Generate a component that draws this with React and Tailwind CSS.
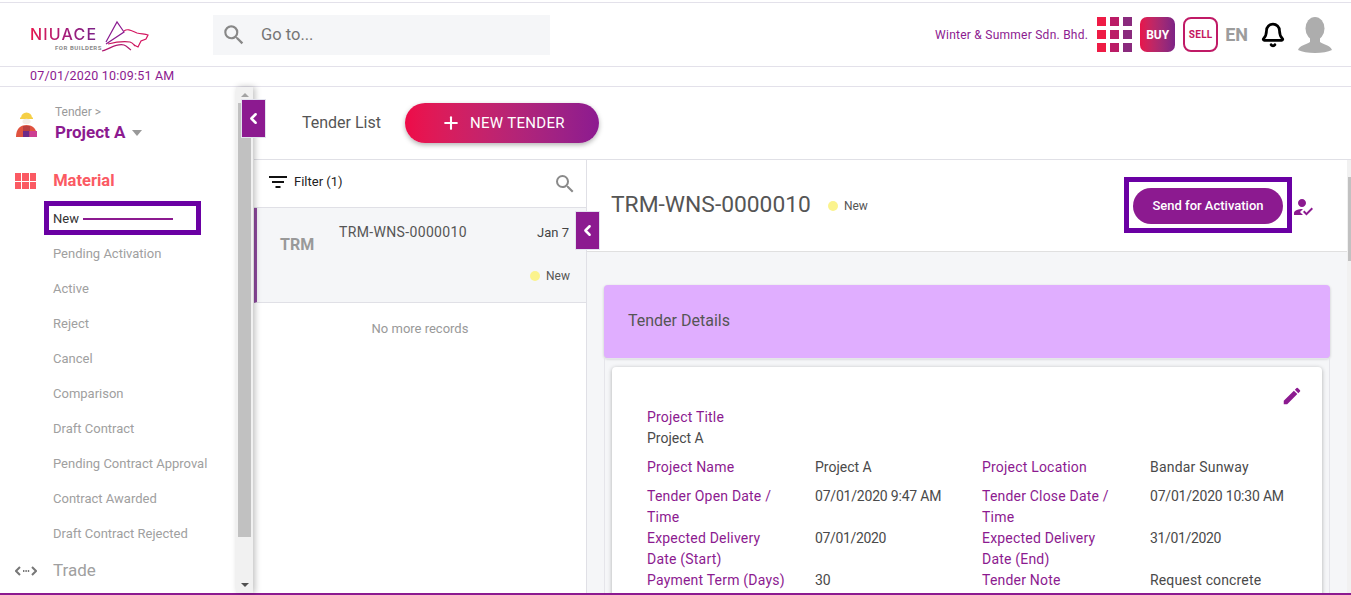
import React from "react";
import { ChevronLeft, Plus, Bell } from "lucide-react";
import { MdSearch, MdEdit, MdHowToReg } from "react-icons/md";

const menuItems = [
  "Pending Activation",
  "Active",
  "Reject",
  "Cancel",
  "Comparison",
  "Draft Contract",
  "Pending Contract Approval",
  "Contract Awarded",
  "Draft Contract Rejected",
];

const Logo = () => (
  <div className="relative w-[125px] h-[40px]">
    <span className="absolute left-0 top-[10px] text-[16px] leading-[18px] tracking-[1.2px] font-medium font-['Inter'] bg-gradient-to-r from-[#e8134a] via-[#a81a78] to-[#7a2088] bg-clip-text text-transparent">
      NIUACE
    </span>
    <span className="absolute left-[25px] top-[29px] text-[6px] leading-[7px] font-bold tracking-[0.55px] text-[#8a8a8a]">
      FOR BUILDERS
    </span>
    <svg className="absolute left-[70px] top-0 overflow-visible" width="50" height="38" viewBox="0 0 50 38" fill="none" strokeWidth="1.2">
      <path d="M6 27 L17 7 L24 17 L6 29" stroke="#8a1a90" />
      <path d="M24 16 C28 13 32 16 37 18 C41 19 45 19 48 20 L46 24 L41 26 L38 32 L34 30" stroke="#d41560" />
      <path d="M2 36 C10 34 16 28 24 30 C27 31 29 34 31 35" stroke="#b0186f" />
      <path d="M8 29 C16 27 22 26 30 27 C33 28 34 30 35 31" stroke="#c8175f" />
    </svg>
  </div>
);

const CollapseButton = ({ className }) => (
  <button className={`absolute z-20 w-[25px] h-[39px] bg-[#8c1a90] border border-[#e3e3ee] flex items-center justify-center ${className}`}>
    <ChevronLeft size={17} strokeWidth={3.5} color="#fff" />
  </button>
);

const Field = ({ label, value, valueClass = "" }) => (
  <>
    <div className="text-[#8c1a90] tracking-[0.2px]">{label}</div>
    <div className={`text-[#4a4a4a] ${valueClass}`}>{value}</div>
  </>
);

export default function App() {
  return (
    <div className="relative h-[595px] overflow-hidden bg-white font-['Roboto',sans-serif] text-[14px] flex flex-col">
      <div className="h-[3px] shrink-0 border-b border-[#e3e1ea]" />
      {/* Top bar */}
      <header className="h-[64px] shrink-0 border-b border-[#e3e1ea] flex items-center pl-[30px] pr-[19px]">
        <Logo />
        <div className="ml-[58px] w-[337px] h-[40px] bg-[#f5f6f8] flex items-center pl-[8px]">
          <MdSearch size={26} color="#888" />
          <span className="ml-[14px] mt-[1px] text-[16.5px] text-[#757575]">Go to...</span>
        </div>
        <div className="ml-auto flex items-center h-full">
          <span className="text-[12px] tracking-[0.25px] text-[#8c1a90]">Winter &amp; Summer Sdn. Bhd.</span>
          <div className="ml-[9px] grid grid-cols-3 gap-[4px]">
            {["#ee1b45", "#bb1c66", "#8a2a7d", "#ee1b45", "#bb1c66", "#8a2a7d", "#ee1b45", "#bb1c66", "#8a2a7d"].map((color, i) => (
              <div key={i} className="w-[9px] h-[9px]" style={{ backgroundColor: color }} />
            ))}
          </div>
          <div className="ml-[8px] w-[35px] h-[35px] rounded-[7px] bg-gradient-to-r from-[#e8134a] to-[#7d2285] flex items-center justify-center text-white text-[12px] font-bold">
            BUY
          </div>
          <div className="ml-[8px] w-[35px] h-[35px] rounded-[8px] border-[2.5px] border-[#c01a66] flex items-center justify-center text-[#c4165c] text-[10px] font-bold tracking-[0.3px]">
            SELL
          </div>
          <span className="ml-[7px] text-[18px] font-bold text-[#9c9c9c]">EN</span>
          <Bell className="ml-[12px]" size={26} color="#000" strokeWidth={2.5} />
          <div className="ml-[12px] w-[34px] h-[36px] overflow-hidden">
            <svg width="34" height="36" viewBox="0 0 34 36" fill="#adadad">
              <ellipse cx="17" cy="11.5" rx="9.5" ry="11.5" />
              <path d="M12 19 L22 19 L22 25 C26 28 32 28 34 33 C30 35 24 36 17 36 C10 36 4 35 0 33 C2 28 8 28 12 25 Z" />
            </svg>
          </div>
        </div>
      </header>

      {/* Clock */}
      <div className="h-[20px] shrink-0 border-b border-[#e3e1ea] pl-[30px] text-[12.5px] leading-[18px] tracking-[0.2px] text-[#8c1a90]">
        07/01/2020 10:09:51 AM
      </div>

      <div className="flex-1 flex min-h-0 border-b-2 border-[#8c1a90] relative">
        {/* Sidebar */}
        <aside className="w-[236px] shrink-0 bg-white overflow-hidden">
          <div className="flex pl-[15px] pt-[18px] h-[77px]">
            <svg className="mt-[6px]" width="22" height="27" viewBox="0 0 22 27">
              <path d="M6 7 a5.5 5.5 0 0 1 11 0 Z" fill="#f5cf45" />
              <rect x="5" y="6.5" width="13" height="1.5" fill="#f5cf45" />
              <ellipse cx="11.5" cy="10.5" rx="4" ry="2.8" fill="#f3ece6" />
              <path d="M1 26 C1 18 5 14 11.5 14 C18 14 22 18 22 26 Z" fill="#e0533f" />
              <rect x="8" y="15" width="7" height="5" fill="#b9403f" />
              <rect x="8" y="20" width="6.5" height="6" fill="#6d2a88" />
              <rect x="14.5" y="20" width="7.5" height="6" fill="#cc3f92" />
            </svg>
            <div className="ml-[18px]">
              <div className="text-[12px] leading-[14px] text-[#9a9a9a]">Tender &gt;</div>
              <div className="flex items-center text-[17px] leading-[22px] mt-[2px] font-bold text-[#8c1a90]">
                Project A
                <span className="ml-[7px] mt-[2px] w-0 h-0 border-x-[5px] border-x-transparent border-t-[6px] border-t-[#999]" />
              </div>
            </div>
          </div>

          <div className="flex items-center pl-[15px] h-[34px]">
            <div className="grid grid-cols-3 gap-[1px]">
              {[0, 1, 2, 3, 4, 5].map((i) => (
                <div key={i} className="w-[6.4px] h-[7.5px] bg-[#fb5a63]" />
              ))}
            </div>
            <span className="ml-[17px] text-[16.5px] font-bold text-[#fb5a63]">Material</span>
          </div>

          <ul className="mt-[3px] pl-[53px] text-[13px]">
            <li className="h-[35px] flex items-center text-[#333]">
              New
              <span className="ml-[4px] w-[90px] h-[2px] bg-[#8c1a90]" />
            </li>
            {menuItems.map((item) => (
              <li key={item} className="h-[35px] flex items-center text-[#a0a0a0]">
                {item}
              </li>
            ))}
          </ul>

          <div className="flex items-center pl-[15px] h-[39px]">
            <svg width="22" height="12" viewBox="0 0 22 12" fill="none" stroke="#777" strokeWidth="2">
              <path d="M5 2 L1 6 L5 10" />
              <path d="M17 2 L21 6 L17 10" />
              <path d="M8 6 h1.4 M10.4 6 h1.4 M12.8 6 h1.4" />
            </svg>
            <span className="ml-[16px] text-[17px] text-[#a0a0a0]">Trade</span>
          </div>
        </aside>

        {/* Sidebar scrollbar */}
        <div className="w-[17px] shrink-0 bg-[#f1f1f1] pl-[2px] pr-[2px] flex flex-col shadow-[2px_0_6px_rgba(0,0,0,0.25)] z-10">
          <div className="h-[16px] flex items-center justify-center">
            <span className="w-0 h-0 border-x-[4px] border-x-transparent border-b-[4px] border-b-[#a3a3a3]" />
          </div>
          <div className="h-[434px] bg-[#c1c1c1]" />
          <div className="mt-auto h-[16px] flex items-center justify-center">
            <span className="w-0 h-0 border-x-[4px] border-x-transparent border-t-[4px] border-t-[#505050]" />
          </div>
        </div>

        {/* Main */}
        <main className="flex-1 min-w-0 ml-[1px] flex flex-col">
          <div className="h-[73px] shrink-0 flex items-center pl-[48px] border-b border-[#e0e0e6]">
            <span className="text-[16px] text-[#555]">Tender List</span>
            <button className="ml-[24px] w-[194px] h-[40px] rounded-[20px] bg-gradient-to-r from-[#ee0a48] to-[#8c1a90] shadow-[0_2px_5px_rgba(0,0,0,0.3)] flex items-center pl-[36px] text-white text-[15px] tracking-[0.3px]">
              <Plus size={20} strokeWidth={2.5} className="mr-[9px]" />
              NEW TENDER
            </button>
          </div>

          <div className="flex-1 min-h-0 flex">
            {/* Tender list */}
            <section className="w-[333px] shrink-0 border-r border-[#e0e0e6] bg-white">
              <div className="h-[48px] pb-[4px] border-b border-[#e0e0e6] flex items-center pl-[15px] pr-[9px] text-[13px] text-[#222]">
                <svg width="18" height="12" viewBox="0 0 18 12" fill="#111">
                  <rect x="0" y="0" width="18" height="2" />
                  <rect x="3" y="5" width="12" height="2" />
                  <rect x="6.5" y="10" width="5" height="2" />
                </svg>
                <span className="ml-[7px]">Filter (1)</span>
                <MdSearch className="ml-auto mt-[4px]" size={24} color="#8a8a8a" />
              </div>
              <div className="h-[95px] bg-[#f5f6f8] border-l-[3px] border-[#8e4a9e] border-b border-b-[#e0e0e6] flex relative">
                <span className="ml-[23px] mt-[27px] text-[16px] leading-[20px] font-bold text-[#999]">TRM</span>
                <span className="absolute left-[82px] top-[15px] text-[14px] leading-[18px] tracking-[0.35px] text-[#555]">TRM-WNS-0000010</span>
                <span className="absolute right-[17px] top-[16px] text-[13px] leading-[18px] text-[#444]">Jan 7</span>
                <span className="absolute right-[16px] top-[59px] flex items-center text-[12px] leading-[18px] text-[#555]">
                  <span className="w-[10px] h-[10px] rounded-full bg-[#fbf38d] mr-[6px]" />
                  New
                </span>
              </div>
              <div className="pt-[18px] text-center text-[13px] leading-[16px] text-[#999]">No more records</div>
            </section>

            {/* Detail */}
            <section className="flex-1 min-w-0 flex">
              <div className="flex-1 min-w-0 flex flex-col bg-[#f5f6f8] overflow-hidden">
                <div className="h-[92px] shrink-0 bg-white border-b border-[#e0e0e0] flex items-center pl-[24px]">
                  <span className="text-[22.8px] text-[#555]">TRM-WNS-0000010</span>
                  <span className="ml-[17px] w-[10px] h-[10px] rounded-full bg-[#fbf38d]" />
                  <span className="ml-[6px] text-[12px] text-[#555]">New</span>
                  <button className="ml-auto mr-[8px] w-[150px] h-[36px] rounded-[18px] bg-[#8c1a90] text-white text-[13px] font-medium">
                    Send for Activation
                  </button>
                  <MdHowToReg className="mr-[32px] mt-[2px]" size={24} color="#8c1a90" />
                </div>
                <div className="pl-[17px] pr-[17px] pt-[33px]">
                  <div className="h-[73px] pb-[2px] bg-[#e0aeff] rounded-[4px] shadow-[0_1px_3px_rgba(0,0,0,0.2)] flex items-center pl-[24px] text-[16px] text-[#555]">
                    Tender Details
                  </div>
                  <div className="border border-[#e5e5ea] px-[7px] pt-[8px]">
                    <div className="relative bg-white rounded-[4px] shadow-[0_1px_4px_rgba(0,0,0,0.3)] pl-[35px] pr-[20px] pt-[40px] pb-[20px] leading-[21px]">
                      <MdEdit className="absolute right-[19px] top-[18px]" size={22} color="#8c1a90" />
                      <div className="text-[#8c1a90] tracking-[0.2px]">Project Title</div>
                      <div className="text-[#4a4a4a]">Project A</div>
                      <div className="mt-[8px] grid grid-cols-[168px_167px_168px_1fr] gap-y-[8px]">
                        <Field label="Project Name" value="Project A" />
                        <Field label="Project Location" value="Bandar Sunway" valueClass="tracking-[0.2px]" />
                        <Field label={<>Tender Open Date /<br />Time</>} value="07/01/2020 9:47 AM" valueClass="tracking-[-0.2px]" />
                        <Field label={<>Tender Close Date /<br />Time</>} value="07/01/2020 10:30 AM" valueClass="tracking-[-0.2px]" />
                      </div>
                      <div className="grid grid-cols-[168px_167px_168px_1fr]">
                        <Field label={<>Expected Delivery<br />Date (Start)</>} value="07/01/2020" valueClass="tracking-[-0.35px]" />
                        <Field label={<>Expected Delivery<br />Date (End)</>} value="31/01/2020" valueClass="tracking-[-0.35px]" />
                        <Field label="Payment Term (Days)" value="30" />
                        <Field label="Tender Note" value="Request concrete" valueClass="tracking-[0.15px]" />
                      </div>
                    </div>
                  </div>
                </div>
              </div>
              {/* Page scrollbar */}
              <div className="w-[4px] shrink-0 bg-[#f1f1f1] pl-[1px] pt-[17px]">
                <div className="h-[84px] bg-[#c1c1c1]" />
              </div>
            </section>
          </div>
        </main>

        <CollapseButton className="left-[241px] top-[12px]" />
        <CollapseButton className="left-[575px] top-[124px]" />
      </div>

      {/* Annotation boxes */}
      <div className="absolute left-[44px] top-[201px] w-[157px] h-[34px] border-[5px] border-[#6a00a3] z-30" />
      <div className="absolute left-[1124px] top-[177px] w-[168px] h-[56px] border-[5px] border-[#6a00a3] z-30" />
    </div>
  );
}
